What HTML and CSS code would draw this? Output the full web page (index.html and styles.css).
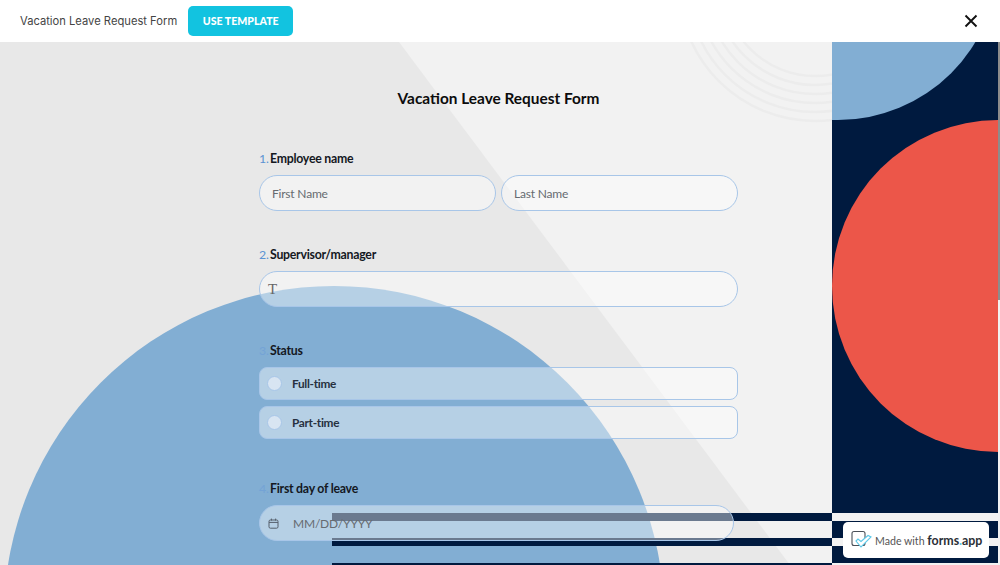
FILE: index.html

```html
<!DOCTYPE html>
<html lang="en">
<head>
    <meta charset="UTF-8">
    <meta name="viewport" content="width=device-width, initial-scale=1.0">
    <title>Vacation Leave Request Form</title>
    <link rel="stylesheet" href="styles.css">
</head>
<body>
    <header class="topbar">
        <span class="topbar-title">Vacation Leave Request Form</span>
        <button class="use-btn">USE TEMPLATE</button>
        <svg class="close-icon" width="14" height="14" viewBox="0 0 14 14">
            <path d="M1.5 1.5l11 11M12.5 1.5l-11 11" fill="none" stroke="#111" stroke-width="1.9"/>
        </svg>
    </header>

    <main class="content">
        <section class="stage">
            <!-- decor behind the form -->
            <svg class="stage-decor" width="832" height="523" viewBox="0 0 832 523">
                <polygon points="0,0 399,0 790,523 0,523" fill="#e8e8e8"/>
                <g fill="none" stroke="#ececec" stroke-width="2.5">
                    <circle cx="815" cy="-57" r="136"/>
                    <circle cx="815" cy="-57" r="127"/>
                    <circle cx="815" cy="-57" r="118"/>
                    <circle cx="815" cy="-57" r="109"/>
                    <circle cx="815" cy="-57" r="100"/>
                    <circle cx="815" cy="-57" r="91"/>
                </g>
                <circle cx="334" cy="574" r="330" fill="#82aed3"/>
                <rect x="332" y="471" width="500" height="8" fill="#001a3f"/>
                <rect x="332" y="496" width="500" height="8" fill="#001a3f"/>
                <rect x="332" y="521" width="500" height="2" fill="#001a3f"/>
            </svg>

            <form class="form">
                <h1 class="form-title">Vacation Leave Request Form</h1>

                <div class="field">
                    <label class="field-label"><span class="num">1.</span>Employee name</label>
                    <div class="name-row">
                        <div class="input"><span class="placeholder">First Name</span></div>
                        <div class="input"><span class="placeholder">Last Name</span></div>
                    </div>
                </div>

                <div class="field">
                    <label class="field-label"><span class="num">2.</span>Supervisor/manager</label>
                    <div class="input"><span class="text-cursor">T</span></div>
                </div>

                <div class="field">
                    <label class="field-label"><span class="num num-faint">3.</span>Status</label>
                    <div class="options">
                        <div class="option"><span class="radio"></span>Full-time</div>
                        <div class="option"><span class="radio"></span>Part-time</div>
                    </div>
                </div>

                <div class="field">
                    <label class="field-label"><span class="num num-faint">4.</span>First day of leave</label>
                    <div class="input input-date">
                        <svg class="date-icon" width="11" height="11" viewBox="0 0 11 11">
                            <rect x="1" y="2" width="9" height="8.2" rx="1.4" fill="none" stroke="#555f6b" stroke-width="1"/>
                            <path d="M1 4.4h9M3.4 .6v2M7.6 .6v2" fill="none" stroke="#555f6b" stroke-width="1"/>
                        </svg>
                        <span class="placeholder">MM/DD/YYYY</span>
                    </div>
                </div>
            </form>
        </section>

        <aside class="side">
            <svg class="side-art" width="166" height="523" viewBox="0 0 166 523">
                <rect width="166" height="523" fill="#001a3f"/>
                <circle cx="6" cy="-82" r="160" fill="#82aed3"/>
                <circle cx="166" cy="244" r="166" fill="#ec5649"/>
                <rect y="471" width="166" height="8" fill="#f2f2f2"/>
                <rect y="496" width="166" height="8" fill="#f2f2f2"/>
                <rect y="521" width="166" height="2" fill="#f2f2f2"/>
            </svg>
            <div class="scroll-thumb"></div>
            <a class="made-with">
                <svg width="22" height="20" viewBox="0 0 22 20">
                    <rect x="1" y="1.5" width="13" height="14" rx="2" fill="none" stroke="#4a5058" stroke-width="1.1"/>
                    <path d="M5 11l2-2 3 2.5 7-6 3 1.5-10 10z" fill="white" stroke="#5cc8e8" stroke-width="1.1"/>
                </svg>
                <span>Made with <b>forms<i>.</i>app</b></span>
            </a>
        </aside>
    </main>
</body>
</html>
```

FILE: styles.css

```css
* {
    margin: 0;
    padding: 0;
    box-sizing: border-box;
}

body {
    width: 1000px;
    height: 565px;
    overflow: hidden;
    font-family: Lato, sans-serif;
    background: #f2f2f2;
}

.topbar {
    height: 42px;
    background: white;
    display: flex;
    align-items: center;
    padding: 0 22px 0 20px;
}

.topbar-title {
    font-family: Inter, sans-serif;
    font-size: 11.2px;
    color: #444;
}

.use-btn {
    margin-left: 11px;
    width: 105px;
    height: 30px;
    border: none;
    border-radius: 5px;
    background: #12c3e0;
    color: white;
    font-family: Lato, sans-serif;
    font-size: 10.6px;
    font-weight: 900;
}

.close-icon {
    margin-left: auto;
}

.content {
    display: flex;
    height: 523px;
}

.stage {
    position: relative;
    width: 832px;
    overflow: hidden;
}

.stage-decor {
    position: absolute;
    top: 0;
    left: 0;
}

.form {
    position: relative;
    width: 479px;
    margin-left: 259px;
    padding-top: 45px;
}

.form-title {
    font-size: 15.4px;
    font-weight: 700;
    color: #0c0c0c;
    text-align: center;
    line-height: 22px;
    margin-bottom: 42px;
}

.field {
    margin-bottom: 36px;
}

.field-label {
    display: block;
    font-size: 12.3px;
    font-weight: 700;
    letter-spacing: -0.25px;
    color: #14181f;
    line-height: 16px;
    margin-bottom: 8px;
}

.num {
    display: inline-block;
    width: 11px;
    color: #5b93d3;
    font-weight: 400;
}

.num-faint {
    color: #74a3d6;
}

.name-row {
    display: flex;
    gap: 5px;
}

.input {
    flex: 1;
    height: 36px;
    display: flex;
    align-items: center;
    padding: 0 12px;
    border: 1px solid #a8c6e8;
    border-radius: 18px;
    background: rgba(255, 255, 255, 0.42);
}

.placeholder {
    font-size: 12px;
    letter-spacing: -0.2px;
    color: #666b70;
}

.text-cursor {
    font-family: "Liberation Serif", serif;
    font-size: 15px;
    color: #666;
    margin-left: -4px;
}

.options {
    display: flex;
    flex-direction: column;
    gap: 6px;
    padding-bottom: 6px;
}

.option {
    height: 33px;
    display: flex;
    align-items: center;
    gap: 10px;
    padding-left: 7px;
    border: 1px solid #a8c6e8;
    border-radius: 8px;
    background: rgba(255, 255, 255, 0.42);
    font-size: 11.8px;
    font-weight: 700;
    letter-spacing: -0.3px;
    color: #263040;
}

.radio {
    width: 15px;
    height: 15px;
    border: 1px solid #a8c6e8;
    border-radius: 50%;
    background: #d8e5f2;
}

.input-date {
    width: 475px;
    flex: none;
    padding-left: 8px;
    gap: 14px;
}

.date-icon {
    flex: none;
}

.side {
    position: relative;
    width: 168px;
    background: #f2f2f2;
}

.side-art {
    display: block;
}

.scroll-thumb {
    position: absolute;
    top: 0;
    right: 0;
    width: 2px;
    height: 258px;
    background: #8c8c8c;
}

.made-with {
    position: absolute;
    left: 11px;
    top: 480px;
    width: 146px;
    height: 36px;
    display: flex;
    align-items: center;
    gap: 2px;
    padding-left: 8px;
    background: white;
    border-radius: 5px;
    font-size: 10.6px;
    color: #555;
}

.made-with b {
    font-size: 12.4px;
    color: #2b2f36;
}

.made-with i {
    color: #5cc8e8;
    font-style: normal;
}
```
